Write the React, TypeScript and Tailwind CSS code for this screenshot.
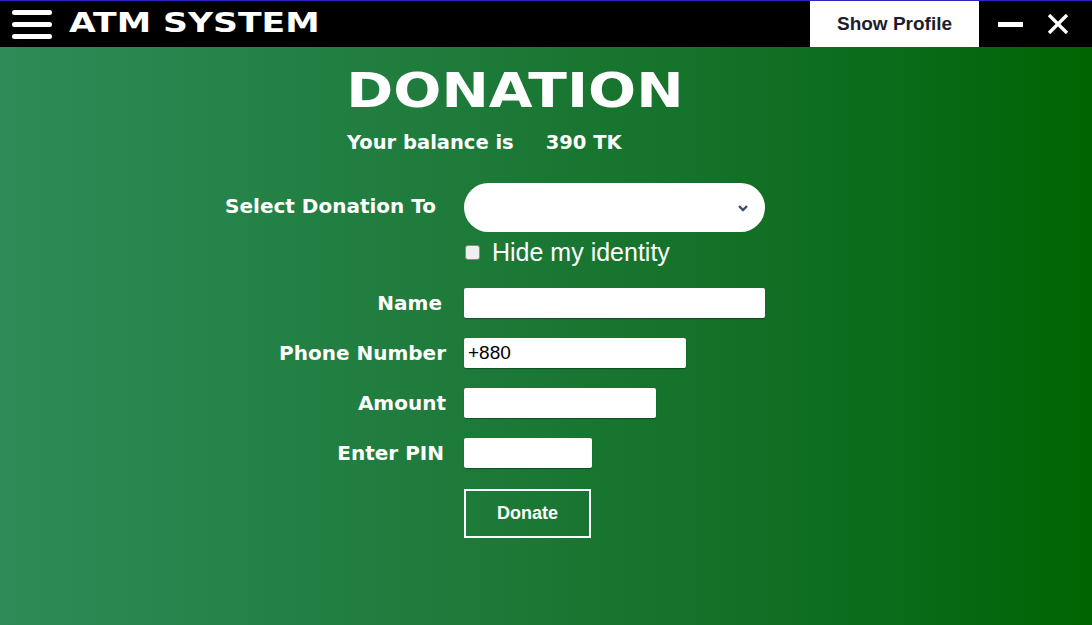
import { useState } from "react";

const Field = ({
  label,
  labelPad,
  width,
  value,
}: {
  label: string;
  labelPad: string;
  width: string;
  value?: string;
}) => {
  return (
    <div className="flex h-[30px] items-center">
      <div className={`w-[246px] text-right text-[20px] font-bold text-white ${labelPad}`}>
        {label}
      </div>
      <input
        defaultValue={value}
        className={`ml-[18px] h-[30px] rounded-[2px] bg-white px-[4px] font-['Liberation_Sans',sans-serif] text-[19px] text-black shadow-[0_1px_1px_rgba(0,0,0,0.35)] outline-none ${width}`}
      />
    </div>
  );
};

const App = () => {
  const [hidden, setHidden] = useState(false);

  return (
    <div className="flex h-[625px] w-[1092px] flex-col overflow-hidden font-['DejaVu_Sans',sans-serif]">
      {/* top bar */}
      <div className="flex h-[47px] shrink-0 items-center border-t border-[#3322c4] bg-black">
        <div className="ml-[12px] flex w-[40px] shrink-0 flex-col gap-[7px]">
          <span className="h-[5px] rounded-full bg-white" />
          <span className="h-[5px] rounded-full bg-white" />
          <span className="h-[5px] rounded-full bg-white" />
        </div>
        <div className="ml-[17px] w-[200px] shrink-0">
          <span className="inline-block origin-left scale-x-[1.33] text-[26px] leading-none font-bold text-white">
            ATM SYSTEM
          </span>
        </div>
        <div className="ml-auto flex h-full w-[169px] shrink-0 items-center justify-center bg-white font-['Liberation_Sans',sans-serif] text-[19px] font-bold text-[#1c1c2e]">
          Show Profile
        </div>
        <div className="ml-[19px] h-[5px] w-[25px] shrink-0 bg-white" />
        <svg className="mr-[23px] ml-[24px] shrink-0" width="22" height="20" viewBox="0 0 22 20">
          <path d="M2 1 L20 19 M20 1 L2 19" stroke="white" strokeWidth="3.4" />
        </svg>
      </div>

      {/* body */}
      <div className="flex-1 bg-linear-to-r from-[#2e8b57] to-[#006400]">
        <div className="ml-[200px] w-[629px]">
          <div className="mt-[13px] flex h-[60px] items-center justify-center">
            <span className="inline-block scale-x-[1.18] text-[48px] leading-none font-bold text-white">
              DONATION
            </span>
          </div>
          <div className="mt-[11px] flex h-[24px] items-center pl-[147px] text-[19.5px] font-bold text-white">
            <span>Your balance is</span>
            <span className="ml-[32px]">390 TK</span>
          </div>

          <div className="mt-[28px] flex h-[49px] items-center">
            <div className="w-[246px] pr-[10px] pb-[3px] text-right text-[20px] font-bold text-white">
              Select Donation To
            </div>
            <div className="relative ml-[18px] h-[49px] w-[301px] rounded-full bg-white">
              <svg
                className="absolute top-[21px] right-[16px]"
                width="12"
                height="8"
                viewBox="0 0 12 8"
              >
                <path d="M2 2 L6 6 L10 2" stroke="#3f4d6b" strokeWidth="2.4" fill="none" />
              </svg>
            </div>
          </div>

          <div className="mt-[6px] ml-[265px] flex h-[28px] items-center">
            <button
              onClick={() => setHidden(!hidden)}
              className="h-[15px] w-[15px] rounded-[3px] border border-[#8a8a8a] bg-[#efefef]"
            />
            <span className="ml-[12px] font-['Liberation_Sans',sans-serif] text-[25px] leading-none text-white">
              Hide my identity
            </span>
          </div>

          <div className="mt-[22px] flex flex-col gap-[20px]">
            <Field label="Name" labelPad="pr-[4px]" width="w-[301px]" />
            <Field label="Phone Number" labelPad="pr-[0px]" width="w-[222px]" value="+880" />
            <Field label="Amount" labelPad="pr-[0px]" width="w-[192px]" />
            <Field label="Enter PIN" labelPad="pr-[2px]" width="w-[128px]" />
          </div>

          <button className="mt-[21px] ml-[264px] h-[49px] w-[127px] border-2 border-white font-['Liberation_Sans',sans-serif] text-[18px] font-bold text-white">
            Donate
          </button>
        </div>
      </div>
    </div>
  );
};

export default App;
